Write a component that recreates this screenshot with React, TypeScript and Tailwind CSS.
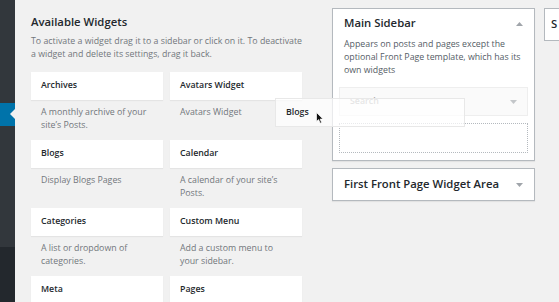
import React from 'react';

type Widget = { title: string; desc: string };

const widgets: Widget[] = [
  { title: 'Archives', desc: 'A monthly archive of your site’s Posts.' },
  { title: 'Avatars Widget', desc: 'Avatars Widget' },
  { title: 'Blogs', desc: 'Display Blogs Pages' },
  { title: 'Calendar', desc: 'A calendar of your site’s Posts.' },
  { title: 'Categories', desc: 'A list or dropdown of categories.' },
  { title: 'Custom Menu', desc: 'Add a custom menu to your sidebar.' },
  { title: 'Meta', desc: '' },
  { title: 'Pages', desc: '' },
];

function Caret({ up = false, faded = false }: { up?: boolean; faded?: boolean }) {
  return (
    <svg width="7" height="4" viewBox="0 0 7 4" className={faded ? 'opacity-60' : ''}>
      <path d={up ? 'M0 4 L3.5 0 L7 4 Z' : 'M0 0 L3.5 4 L7 0 Z'} fill="#a0a5aa" />
    </svg>
  );
}

function Cursor() {
  return (
    <svg width="8" height="12" viewBox="0 0 8 12">
      <path d="M0.5 0.5 L0.5 9.5 L2.6 7.6 L4.2 11.2 L5.6 10.6 L4.1 7.1 L7 7.1 Z" fill="#111" stroke="#fff" strokeWidth="0.7" />
    </svg>
  );
}

export default function App() {
  return (
    <div
      className="relative flex h-[302px] w-[559px] overflow-hidden bg-[#f1f1f1] text-[#23282d]"
      style={{ fontFamily: '"Open Sans", "Noto Sans", sans-serif' }}
    >
      {/* admin menu strip */}
      <div className="flex w-[15px] shrink-0 flex-col">
        <div className="h-[103px] bg-[#32373c]" />
        <div className="relative h-[23px] bg-[#0073aa]">
          <div className="absolute right-0 top-[6px] h-0 w-0 border-y-[5px] border-r-[5px] border-y-transparent border-r-[#f1f1f1]" />
        </div>
        <div className="h-[121px] bg-[#32373c]" />
        <div className="flex-1 bg-[#23282d]" />
      </div>

      {/* available widgets */}
      <div className="w-[287px] shrink-0 pl-[16px] pt-[13px]">
        <h2 className="text-[11.3px] font-semibold leading-[18px]">Available Widgets</h2>
        <p className="mt-[4px] w-[272px] text-[8.8px] leading-[13px] text-[#72777c]">
          To activate a widget drag it to a sidebar or click on it. To deactivate a widget and delete its settings, drag it back.
        </p>
        <div className="mt-[11px] grid grid-cols-[132px_132px] gap-x-[7px]">
          {widgets.map((w) => (
            <div key={w.title} className="flex h-[68px] flex-col">
              <div className="flex h-[28px] items-center bg-white px-[10px] text-[8.8px] font-semibold shadow-[0_1px_1px_rgba(0,0,0,0.05)]">
                {w.title}
              </div>
              <p className="px-[10px] pt-[6px] text-[8.8px] leading-[13px] text-[#72777c]">{w.desc}</p>
            </div>
          ))}
        </div>
      </div>

      {/* sidebars */}
      <div className="ml-[30px] flex shrink-0 gap-[9px] pt-[8px]">
        <div className="flex w-[203px] flex-col gap-[7px]">
          <div className="border border-[#b4b9be] bg-white px-[6px] pb-[7px] shadow-[0_1px_1px_rgba(0,0,0,0.06)]">
            <div className="flex h-[29px] items-center justify-between px-[5px]">
              <span className="text-[11.3px] font-semibold">Main Sidebar</span>
              <Caret up />
            </div>
            <p className="px-[5px] text-[8.8px] leading-[13px] text-[#555d66]">
              Appears on posts and pages except the optional Front Page template, which has its own widgets
            </p>
            <div className="mt-[10px] flex h-[29px] items-center justify-between border border-[#eeeeee] bg-[#fafafa] px-[10px] text-[8.8px] font-semibold text-[#a8a8a8]">
              <span>Search</span>
              <Caret faded />
            </div>
            <div className="mt-[7px] h-[30px] border border-dotted border-[#b4b9be]" />
          </div>
          <div className="flex h-[33px] items-center justify-between border border-[#b4b9be] bg-white px-[11px] shadow-[0_1px_1px_rgba(0,0,0,0.06)]">
            <span className="text-[11.3px] font-semibold">First Front Page Widget Area</span>
            <Caret />
          </div>
        </div>
        <div className="flex h-[33px] w-[60px] items-center border border-[#b4b9be] bg-white px-[6px]">
          <span className="text-[11.3px] font-semibold">S</span>
        </div>
      </div>

      {/* drag helper */}
      <div className="absolute left-[275px] top-[98px] flex h-[29px] w-[190px] items-center border border-[#e8e8e8] bg-white/70 px-[10px] text-[8.8px] font-semibold">
        Blogs
      </div>
      <div className="absolute left-[316px] top-[112px]">
        <Cursor />
      </div>
    </div>
  );
}
